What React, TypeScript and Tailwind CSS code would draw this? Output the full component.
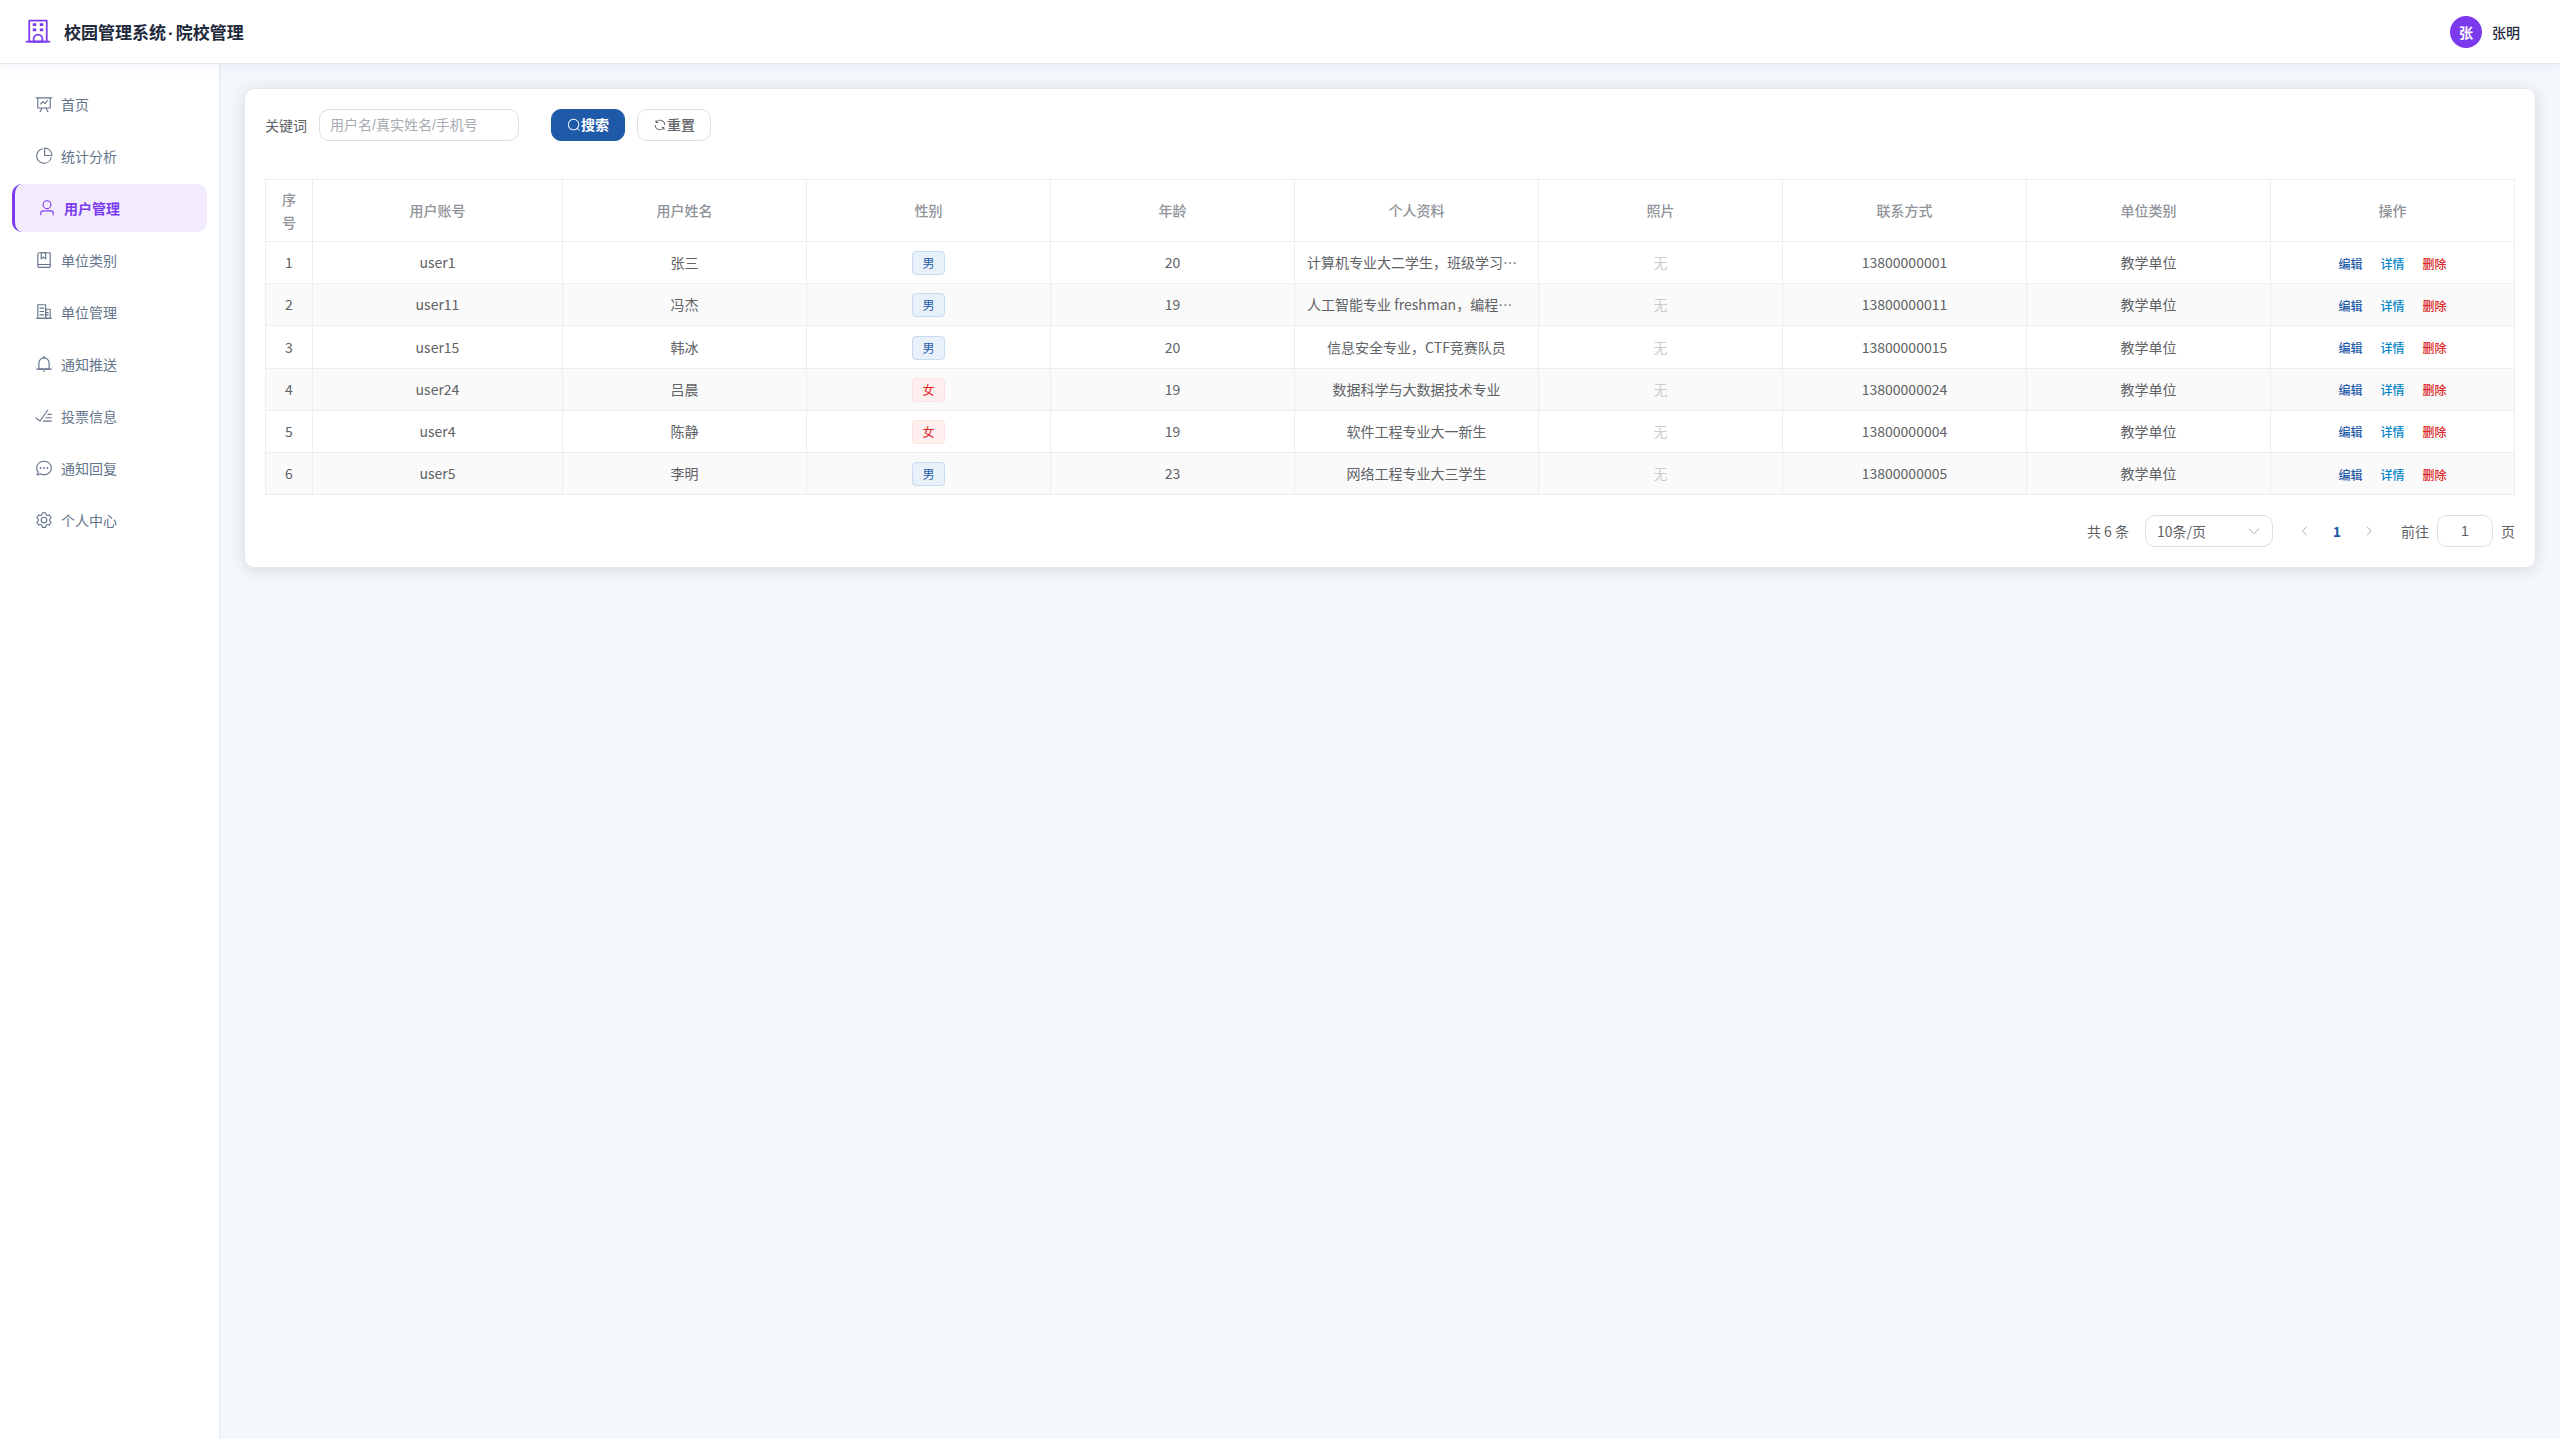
import React, { useState } from 'react';

interface UserRow {
    id: number;
    account: string;
    name: string;
    gender: '男' | '女';
    age: number;
    profile: string;
    phone: string;
    unit: string;
}

const icons = {
    school: [
        'M224 128v704h576V128zm-32-64h640a32 32 0 0 1 32 32v768a32 32 0 0 1-32 32H192a32 32 0 0 1-32-32V96a32 32 0 0 1 32-32',
        'M64 832h896v64H64zm256-640h128v96H320z',
        'M384 832h256v-64a128 128 0 1 0-256 0zm128-256a192 192 0 0 1 192 192v128H320V768a192 192 0 0 1 192-192M320 384h128v96H320zm256-192h128v96H576zm0 192h128v96H576z',
    ],
    dataLine: [
        'M359.168 768H160a32 32 0 0 1-32-32V192H64a32 32 0 0 1 0-64h896a32 32 0 1 1 0 64h-64v544a32 32 0 0 1-32 32H665.216l110.848 192h-73.856L591.36 768H433.024L322.176 960H248.32zM832 192H192v512h640zM342.656 534.656a32 32 0 1 1-45.312-45.312L444.992 341.76l125.44 94.08L679.04 300.032a32 32 0 1 1 49.92 39.936L581.632 524.224 451.008 426.24 342.656 534.592z',
    ],
    pieChart: [
        'M448 68.48v64.832A384.128 384.128 0 0 0 512 896a384.128 384.128 0 0 0 378.688-320h64.768A448.128 448.128 0 0 1 64 512 448.128 448.128 0 0 1 448 68.48',
        'M576 97.28V448h350.72A384.064 384.064 0 0 0 576 97.28M512 64V33.152A448 448 0 0 1 990.848 512H512z',
    ],
    user: [
        'M512 512a192 192 0 1 0 0-384 192 192 0 0 0 0 384m0 64a256 256 0 1 1 0-512 256 256 0 0 1 0 512m320 320v-96a96 96 0 0 0-96-96H288a96 96 0 0 0-96 96v96a32 32 0 1 1-64 0v-96a160 160 0 0 1 160-160h448a160 160 0 0 1 160 160v96a32 32 0 1 1-64 0',
    ],
    collection: [
        'M192 736h640V128H256a64 64 0 0 0-64 64zm64-672h608a32 32 0 0 1 32 32v672a32 32 0 0 1-32 32H160l-32 57.536V192A128 128 0 0 1 256 64',
        'M240 800a48 48 0 1 0 0 96h592v-96zm0-64h656v160a64 64 0 0 1-64 64H240a112 112 0 0 1 0-224m144-608v250.88l96-76.8 96 76.8V128zm-64-64h320v381.44a32 32 0 0 1-51.968 24.96L480 384l-108.032 86.4A32 32 0 0 1 320 445.44z',
    ],
    office: [
        'M192 128v704h384V128zm-32-64h448a32 32 0 0 1 32 32v768a32 32 0 0 1-32 32H160a32 32 0 0 1-32-32V96a32 32 0 0 1 32-32',
        'M256 256h256v64H256zm0 192h256v64H256zm0 192h256v64H256zm384-128h128v64H640zm0 128h128v64H640zM64 832h896v64H64z',
        'M640 384v448h192V384zm-32-64h256a32 32 0 0 1 32 32v512a32 32 0 0 1-32 32H608a32 32 0 0 1-32-32V352a32 32 0 0 1 32-32',
    ],
    bell: [
        'M512 64a64 64 0 0 1 64 64v64H448v-64a64 64 0 0 1 64-64',
        'M256 768h512V448a256 256 0 1 0-512 0zm256-640a320 320 0 0 1 320 320v384H192V448a320 320 0 0 1 320-320',
        'M96 768h832q32 0 32 32t-32 32H96q-32 0-32-32t32-32m352 128h128a64 64 0 0 1-128 0',
    ],
    finished: [
        'M280.768 753.728 691.456 167.04a32 32 0 1 1 52.416 36.672L314.24 817.472a32 32 0 0 1-45.44 7.296l-230.4-172.8a32 32 0 0 1 38.4-51.2zM736 448a32 32 0 1 1 0-64h192a32 32 0 1 1 0 64zM608 640a32 32 0 0 1 0-64h319.936a32 32 0 1 1 0 64zM480 832a32 32 0 1 1 0-64h447.936a32 32 0 1 1 0 64z',
    ],
    chat: [
        'm174.72 855.68 135.296-45.12 23.68 11.84C388.096 849.536 448.576 864 512 864c211.84 0 384-166.784 384-352S723.84 160 512 160 128 326.784 128 512c0 69.12 24.96 139.264 70.848 199.232l22.08 28.8-46.272 115.584zm-45.248 82.56A32 32 0 0 1 89.6 896l58.368-145.92C94.72 680.32 64 596.864 64 512 64 299.904 256 96 512 96s448 203.904 448 416-192 416-448 416a461.06 461.06 0 0 1-206.912-48.384l-175.616 58.56z',
        'M512 563.2a51.2 51.2 0 1 1 0-102.4 51.2 51.2 0 0 1 0 102.4m192 0a51.2 51.2 0 1 1 0-102.4 51.2 51.2 0 0 1 0 102.4m-384 0a51.2 51.2 0 1 1 0-102.4 51.2 51.2 0 0 1 0 102.4',
    ],
    setting: [
        'M600.704 64a32 32 0 0 1 30.464 22.208l35.2 109.376c14.784 7.232 28.928 15.36 42.432 24.512l112.384-24.192a32 32 0 0 1 34.432 15.36L944.32 364.8a32 32 0 0 1-4.032 37.504l-77.12 85.12a357 357 0 0 1 0 49.024l77.12 85.248a32 32 0 0 1 4.032 37.504l-88.704 153.6a32 32 0 0 1-34.432 15.296L708.8 803.904c-13.44 9.088-27.648 17.28-42.368 24.512l-35.264 109.376A32 32 0 0 1 600.704 960H423.296a32 32 0 0 1-30.464-22.208L357.696 828.48a352 352 0 0 1-42.56-24.64l-112.32 24.256a32 32 0 0 1-34.432-15.36L79.68 659.2a32 32 0 0 1 4.032-37.504l77.12-85.248a357 357 0 0 1 0-48.896l-77.12-85.248A32 32 0 0 1 79.68 364.8l88.704-153.6a32 32 0 0 1 34.432-15.296l112.32 24.256c13.568-9.152 27.776-17.408 42.56-24.64l35.2-109.312A32 32 0 0 1 423.232 64H600.64zm-23.424 64H446.72l-36.352 113.088-24.512 11.968a294 294 0 0 0-34.816 20.096l-22.656 15.36-116.224-25.088-65.28 113.152 79.68 88.192-1.92 27.136a293 293 0 0 0 0 40.192l1.92 27.136-79.808 88.192 65.344 113.152 116.224-25.024 22.656 15.296a294 294 0 0 0 34.816 20.096l24.512 11.968L446.72 896h130.688l36.48-113.152 24.448-11.904a288 288 0 0 0 34.752-20.096l22.592-15.296 116.288 25.024 65.28-113.152-79.744-88.192 1.92-27.136a293 293 0 0 0 0-40.256l-1.92-27.136 79.808-88.128-65.344-113.152-116.288 24.96-22.592-15.232a288 288 0 0 0-34.752-20.096l-24.448-11.904L577.344 128zM512 320a192 192 0 1 1 0 384 192 192 0 0 1 0-384m0 64a128 128 0 1 0 0 256 128 128 0 0 0 0-256',
    ],
    search: [
        'm795.904 750.72 124.992 124.928a32 32 0 0 1-45.248 45.248L750.656 795.904a416 416 0 1 1 45.248-45.248zM480 832a352 352 0 1 0 0-704 352 352 0 0 0 0 704',
    ],
    refresh: [
        'M771.776 794.88A384 384 0 0 1 128 512h64a320 320 0 0 0 555.712 216.448H654.72a32 32 0 1 1 0-64h149.056a32 32 0 0 1 32 32v148.928a32 32 0 1 1-64 0v-50.56zM276.288 295.616h92.992a32 32 0 0 1 0 64H220.16a32 32 0 0 1-32-32V178.56a32 32 0 0 1 64 0v50.56A384 384 0 0 1 896.128 512h-64a320 320 0 0 0-555.776-216.384z',
    ],
    arrowDown: [
        'M831.872 340.864 512 652.672 192.128 340.864a30.59 30.59 0 0 0-42.752 0 29.12 29.12 0 0 0 0 41.6L489.664 714.24a32 32 0 0 0 44.672 0l340.288-331.712a29.12 29.12 0 0 0 0-41.728 30.59 30.59 0 0 0-42.752 0z',
    ],
    arrowLeft: [
        'M609.408 149.376 277.76 489.6a32 32 0 0 0 0 44.672l331.648 340.352a29.12 29.12 0 0 0 41.728 0 30.59 30.59 0 0 0 0-42.752L339.264 511.936l311.872-319.872a30.59 30.59 0 0 0 0-42.688 29.12 29.12 0 0 0-41.728 0',
    ],
    arrowRight: [
        'M340.864 149.312a30.59 30.59 0 0 0 0 42.752L652.736 512 340.864 831.872a30.59 30.59 0 0 0 0 42.752 29.12 29.12 0 0 0 41.728 0L714.24 534.336a32 32 0 0 0 0-44.672L382.592 149.376a29.12 29.12 0 0 0-41.728 0z',
    ],
};

type IconName = keyof typeof icons;

const Icon: React.FC<{ name: IconName; size: number; className?: string }> = ({ name, size, className }) => (
    <svg viewBox="0 0 1024 1024" width={size} height={size} fill="currentColor" aria-hidden="true" className={className}>
        {icons[name].map(d => (
            <path key={d} d={d} />
        ))}
    </svg>
);

const menu: { label: string; icon: IconName }[] = [
    { label: '首页', icon: 'dataLine' },
    { label: '统计分析', icon: 'pieChart' },
    { label: '用户管理', icon: 'user' },
    { label: '单位类别', icon: 'collection' },
    { label: '单位管理', icon: 'office' },
    { label: '通知推送', icon: 'bell' },
    { label: '投票信息', icon: 'finished' },
    { label: '通知回复', icon: 'chat' },
    { label: '个人中心', icon: 'setting' },
];

const columns = ['序号', '用户账号', '用户姓名', '性别', '年龄', '个人资料', '照片', '联系方式', '单位类别', '操作'];

const users: UserRow[] = [
    { id: 1, account: 'user1', name: '张三', gender: '男', age: 20, profile: '计算机专业大二学生，班级学习委员', phone: '13800000001', unit: '教学单位' },
    { id: 2, account: 'user11', name: '冯杰', gender: '男', age: 19, profile: '人工智能专业 freshman，编程爱好者', phone: '13800000011', unit: '教学单位' },
    { id: 3, account: 'user15', name: '韩冰', gender: '男', age: 20, profile: '信息安全专业，CTF竞赛队员', phone: '13800000015', unit: '教学单位' },
    { id: 4, account: 'user24', name: '吕晨', gender: '女', age: 19, profile: '数据科学与大数据技术专业', phone: '13800000024', unit: '教学单位' },
    { id: 5, account: 'user4', name: '陈静', gender: '女', age: 19, profile: '软件工程专业大一新生', phone: '13800000004', unit: '教学单位' },
    { id: 6, account: 'user5', name: '李明', gender: '男', age: 23, profile: '网络工程专业大三学生', phone: '13800000005', unit: '教学单位' },
];

const Header: React.FC = () => (
    <header className="relative z-10 flex h-16 items-center justify-between border-b border-[#e2e8f0] bg-white pr-10 pl-6 shadow-[0_2px_12px_rgba(30,64,175,0.06)]">
        <div className="flex items-center gap-3">
            <Icon name="school" size={28} className="text-[#7c3aed]" />
            <h1 className="pt-0.5 text-[17px] leading-7 font-bold text-[#1e293b]">
                校园管理系统<span className="mx-0.5 font-['Liberation_Sans',sans-serif]">·</span>院校管理
            </h1>
        </div>
        <button type="button" className="flex items-center gap-2.5 text-sm">
            <span className="flex size-8 items-center justify-center rounded-full bg-[#7c3aed] font-bold text-white">张</span>
            <span className="font-medium text-[#1e293b]">张明</span>
        </button>
    </header>
);

const Sidebar: React.FC = () => (
    <nav className="w-[220px] shrink-0 border-r border-[#e2e8f0] bg-white px-3 py-4">
        <ul className="flex flex-col gap-1">
            {menu.map(item => (
                <li key={item.label}>
                    <a
                        href="#"
                        className={`flex h-12 items-center gap-2 rounded-[10px] px-[23px] text-sm ${item.label === '用户管理'
                            ? 'border-l-3 border-[#7c3aed] bg-[#f2eafd] font-semibold text-[#7c3aed]'
                            : 'text-[#64748b]'
                            }`}
                    >
                        <Icon name={item.icon} size={18} />
                        {item.label}
                    </a>
                </li>
            ))}
        </ul>
    </nav>
);

const GenderTag: React.FC<{ gender: UserRow['gender'] }> = ({ gender }) => (
    <span
        className={`inline-flex h-6 items-center rounded-sm border px-[9px] align-middle text-xs leading-none ${gender === '男'
            ? 'border-[#c7daf0] bg-[#e8f0fa] text-[#1e5aa8]'
            : 'border-[#fde0e0] bg-[#feeeee] text-[#dc2626]'
            }`}
    >
        {gender}
    </span>
);

const UserTable: React.FC = () => (
    <table className="w-full table-fixed border-separate border-spacing-0 border-t border-l border-[#ebeef5] text-center text-sm leading-[23px] text-[#606266]">
        <colgroup>
            <col className="w-[47px]" />
            <col className="w-[250px]" />
            <col span={8} />
        </colgroup>
        <thead>
            <tr className="h-[62px] text-[#909399]">
                {columns.map(col => (
                    <th key={col} scope="col" className="border-r border-b border-[#ebeef5] px-3 py-[7px] font-medium">{col}</th>
                ))}
            </tr>
        </thead>
        <tbody>
            {users.map(user => (
                <tr key={user.id} className="even:bg-[#fafafa] *:border-r *:border-b *:border-[#ebeef5] *:px-3 *:py-2">
                    <td>{user.id}</td>
                    <td>{user.account}</td>
                    <td>{user.name}</td>
                    <td><GenderTag gender={user.gender} /></td>
                    <td>{user.age}</td>
                    <td className="truncate">{user.profile}</td>
                    <td className="text-[#cccccc]">无</td>
                    <td>{user.phone}</td>
                    <td>{user.unit}</td>
                    <td>
                        <div className="flex h-6 items-end justify-center gap-[18px] text-xs leading-[22px] font-medium">
                            <button type="button" className="text-[#1e5aa8]">编辑</button>
                            <button type="button" className="text-[#0284c7]">详情</button>
                            <button type="button" className="text-[#dc2626]">删除</button>
                        </div>
                    </td>
                </tr>
            ))}
        </tbody>
    </table>
);

const Pagination: React.FC = () => {
    const [page, setPage] = useState('1');

    return (
        <div className="mt-5 flex items-center justify-end gap-4 text-sm text-[#606266]">
            <span>共 {users.length} 条</span>
            <div className="relative">
                <select aria-label="每页条数" className="h-8 w-32 appearance-none rounded-[10px] border border-[#dcdfe6] bg-white px-[11px]">
                    <option>10条/页</option>
                    <option>20条/页</option>
                    <option>50条/页</option>
                </select>
                <Icon name="arrowDown" size={14} className="pointer-events-none absolute top-[9px] right-3 text-[#a8abb2]" />
            </div>
            <div className="flex">
                <button type="button" aria-label="上一页" disabled className="flex size-8 items-center justify-center text-[#a8abb2]">
                    <Icon name="arrowLeft" size={12} />
                </button>
                <button type="button" className="size-8 font-bold text-[#1e5aa8]">1</button>
                <button type="button" aria-label="下一页" disabled className="flex size-8 items-center justify-center text-[#a8abb2]">
                    <Icon name="arrowRight" size={12} />
                </button>
            </div>
            <label className="flex items-center gap-2">
                前往
                <input
                    value={page}
                    onChange={e => setPage(e.target.value)}
                    className="h-8 w-14 rounded-[10px] border border-[#dcdfe6] text-center font-['Liberation_Sans','Noto_Sans_CJK_SC',sans-serif]"
                />
                页
            </label>
        </div>
    );
};

const App: React.FC = () => {
    const [keyword, setKeyword] = useState('');

    return (
        <div className="flex min-h-screen flex-col bg-[#f4f7fc] font-['Noto_Sans_CJK_SC',sans-serif]">
            <Header />
            <div className="flex flex-1">
                <Sidebar />
                <main className="min-w-0 flex-1 p-6">
                    <section className="rounded-[10px] border border-[#e2e8f0] bg-white p-5 shadow-[0_2px_16px_rgba(0,0,0,0.12)]">
                        {/* Filter bar */}
                        <form className="mb-[38px] flex items-center text-sm text-[#606266]" onSubmit={e => e.preventDefault()}>
                            <label htmlFor="keyword" className="mr-3">关键词</label>
                            <input
                                id="keyword"
                                value={keyword}
                                onChange={e => setKeyword(e.target.value)}
                                placeholder="用户名/真实姓名/手机号"
                                className="mr-8 h-8 w-[200px] rounded-[10px] border border-[#dcdfe6] px-2.5 font-['Liberation_Sans','Noto_Sans_CJK_SC',sans-serif] placeholder:text-[#a8abb2]"
                            />
                            <button type="submit" className="mr-3 flex h-8 items-center rounded-[10px] border border-[#1e5aa8] bg-[#1e5aa8] px-[15px] font-['Liberation_Sans','Noto_Sans_CJK_SC',sans-serif] leading-none font-semibold text-white">
                                <Icon name="search" size={14} />
                                搜索
                            </button>
                            <button type="button" onClick={() => setKeyword('')} className="flex h-8 items-center rounded-[10px] border border-[#dcdfe6] bg-white px-[15px] font-['Liberation_Sans','Noto_Sans_CJK_SC',sans-serif] leading-none font-medium">
                                <Icon name="refresh" size={14} />
                                重置
                            </button>
                        </form>
                        <UserTable />
                        <Pagination />
                    </section>
                </main>
            </div>
        </div>
    );
};

export default App;
